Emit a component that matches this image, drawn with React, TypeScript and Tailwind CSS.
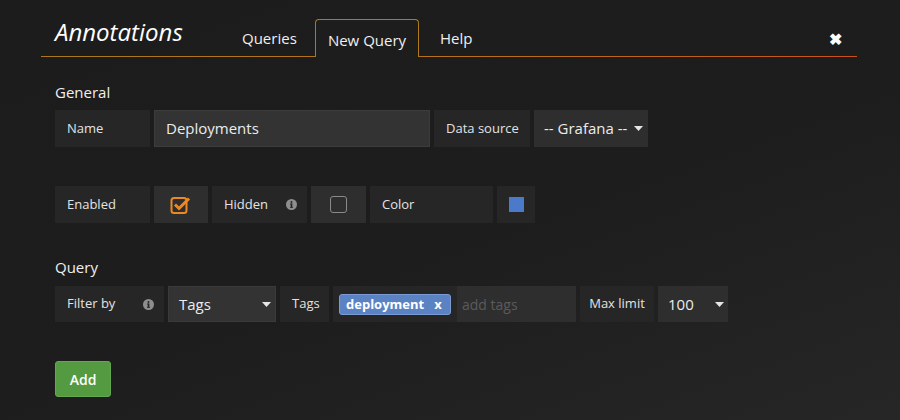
import React from "react";

const Info = () => (
  <svg width="11" height="11" viewBox="0 0 12 12" className="shrink-0">
    <circle cx="6" cy="6" r="6" fill="#8e8e8e" />
    <rect x="5.1" y="5" width="1.8" height="4.5" fill="#262626" />
    <rect x="4.3" y="8.6" width="3.4" height="0.9" fill="#262626" />
    <rect x="4.3" y="5" width="2.4" height="0.9" fill="#262626" />
    <circle cx="6" cy="3.2" r="1.05" fill="#262626" />
  </svg>
);

const Caret = () => (
  <svg width="9" height="5" viewBox="0 0 9 5" className="shrink-0">
    <path d="M0 0 L9 0 L4.5 5 Z" fill="#e6e6e6" />
  </svg>
);

const Label = ({ w, children, extra }: { w: string; children: React.ReactNode; extra?: React.ReactNode }) => (
  <div className={`${w} h-full bg-[#262626] flex items-center justify-between pl-[12px] pr-[10px] text-[13px] text-[#e3e3e3] shrink-0 whitespace-nowrap`}>
    <span>{children}</span>
    {extra}
  </div>
);

export default function App() {
  return (
    <div
      className="w-[900px] h-[420px] overflow-hidden relative bg-[linear-gradient(160deg,#1d1c1d_0%,#1e1d1e_55%,#262626_100%)] text-white"
      style={{ fontFamily: '"Open Sans", "Liberation Sans", sans-serif' }}
    >
      {/* Header */}
      <div className="ml-[41px] w-[816px] pt-[19px] flex items-end h-[57px] relative">
        <div className="absolute left-0 right-0 bottom-0 h-[1.5px] bg-[linear-gradient(90deg,#a9781c,#b8701c_50%,#c9521a)]" />
        <div className="pl-[14px] w-[201px] self-start mt-[-3px] text-[24px] italic text-white leading-[32px]">Annotations</div>
        <div className="w-[73px] h-full flex items-center justify-start text-[15px] text-[#f0f0f0] pt-[1px]">Queries</div>
        <div className="relative z-10 w-[104px] h-[38px] border-[1.5px] border-b-0 border-[#ad791c] rounded-t-[4px] bg-[#1e1d1e] flex items-center justify-center text-[15px] text-[#f0f0f0] pt-[3px]">
          New Query
        </div>
        <div className="w-[72px] h-full flex items-center justify-start pl-[21px] text-[15px] text-[#f0f0f0] pt-[1px]">Help</div>
        <div className="ml-auto mr-[15px] self-center text-[16px] font-bold text-white leading-none mt-[1px]">✖</div>
      </div>

      <div className="pl-[55px]">
        <div className="mt-[25px] text-[15px] text-[#f0f0f0] leading-[20px]">General</div>

        {/* Row 1 */}
        <div className="mt-[8px] h-[37px] flex gap-1">
          <Label w="w-[95px]">Name</Label>
          <div className="w-[276px] h-full bg-[#333333] border border-[#3c3c3c] flex items-center pl-[11px] text-[15px] text-[#ececec]">Deployments</div>
          <Label w="w-[96px]">Data source</Label>
          <div className="w-[114px] h-full bg-[#2e2e2e] flex items-center justify-between pl-[10px] pr-[5px] text-[15px] text-[#ececec]">
            <span>-- Grafana --</span>
            <Caret />
          </div>
        </div>

        {/* Row 2 */}
        <div className="mt-[39px] h-[37px] flex gap-1">
          <Label w="w-[95px]">Enabled</Label>
          <div className="w-[54px] h-full bg-[#2e2e2e] flex items-center justify-center">
            <svg width="22" height="20" viewBox="0 0 22 20">
              <rect x="1.5" y="3" width="15" height="15" rx="2.5" fill="none" stroke="#eb8a24" strokeWidth="2" />
              <path d="M5 9.5 L9 13.5 L19 3.5" fill="none" stroke="#eb8a24" strokeWidth="3" strokeLinejoin="miter" />
            </svg>
          </div>
          <Label w="w-[95px]" extra={<Info />}>Hidden</Label>
          <div className="w-[55px] h-full bg-[#2e2e2e] flex items-center justify-center">
            <div className="w-[17px] h-[17px] border-[1.5px] border-[#8a8a8a] rounded-[3px]" />
          </div>
          <Label w="w-[123px]">Color</Label>
          <div className="w-[38px] h-full bg-[#262626] flex items-center justify-center">
            <div className="w-[15px] h-[15px] bg-[#4b7acb]" />
          </div>
        </div>

        <div className="mt-[34px] text-[15px] text-[#f0f0f0] leading-[20px]">Query</div>

        {/* Row 3 */}
        <div className="mt-[9px] h-[36px] flex gap-1">
          <Label w="w-[109px]" extra={<Info />}>Filter by</Label>
          <div className="w-[108px] h-full bg-[#333333] border border-[#3a3a3a] flex items-center justify-between pl-[10px] pr-[4px] text-[15px] text-[#ececec]">
            <span>Tags</span>
            <Caret />
          </div>
          <Label w="w-[49px]">Tags</Label>
          <div className="w-[243px] h-full flex">
            <div className="w-[124px] h-full bg-[#262626] flex items-center pl-[6px]">
              <div className="h-[21px] mt-[1px] px-[6px] rounded-[3px] bg-[#5b83c3] border border-[#7a9bd3] flex items-center gap-[10px] text-[13px] font-bold text-white">
                <span>deployment</span>
                <span className="pr-[2px]">x</span>
              </div>
            </div>
            <div className="flex-1 h-full bg-[#2e2e2e] flex items-center pl-[5px] text-[14px] text-[#5b5b5b]">add tags</div>
          </div>
          <div className="w-[74px] h-full bg-[#262626] flex items-center justify-center text-[13px] text-[#e3e3e3] shrink-0 whitespace-nowrap">Max limit</div>
          <div className="w-[70px] h-full bg-[#2e2e2e] flex items-center justify-between pl-[10px] pr-[4px] text-[15px] text-[#ececec]">
            <span>100</span>
            <Caret />
          </div>
        </div>

        <div className="mt-[39px] w-[56px] h-[36px] rounded-[3px] bg-[#539a40] border border-[#63a84d] flex items-center justify-center text-[14px] font-semibold text-white">
          Add
        </div>
      </div>
    </div>
  );
}
